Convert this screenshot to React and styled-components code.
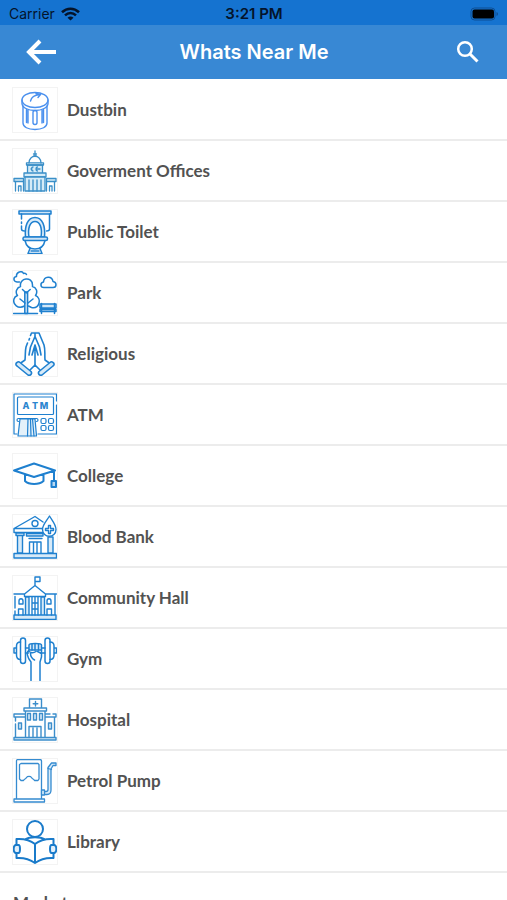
import styled, { createGlobalStyle } from "styled-components";

const GlobalStyle = createGlobalStyle`
  * {
    box-sizing: border-box;
  }

  body {
    margin: 0;
    background-color: white;
  }
`;

const Container = styled.div`
  height: 100vh;
  display: flex;
  flex-direction: column;
  overflow: hidden;
  background-color: white;
  font-family: Inter, "Liberation Sans", sans-serif;
`;

const StatusBar = styled.div`
  flex: none;
  height: 25px;
  padding: 2px 8px 0px 9px;
  display: grid;
  grid-template-columns: 1fr auto 1fr;
  align-items: center;
  background-color: #1573d0;
  color: #04142b;
  font-size: 14px;
`;

const Carrier = styled.div`
  display: flex;
  align-items: center;
  gap: 6px;
`;

const Time = styled.div`
  font-size: 15px;
  font-weight: 600;
`;

const Battery = styled.div`
  display: flex;
  justify-content: flex-end;
`;

const Header = styled.header`
  flex: none;
  height: 54px;
  padding: 0px 23px 0px 24px;
  display: flex;
  align-items: center;
  justify-content: space-between;
  background-color: #3888d4;
`;

const Title = styled.h1`
  margin: 0px;
  color: white;
  font-size: 20px;
  font-weight: 600;
`;

const IconButton = styled.button`
  width: 34px;
  height: 34px;
  padding: 0px;
  display: flex;
  align-items: center;
  justify-content: center;
  border: none;
  background: none;
  color: white;
  cursor: pointer;
`;

const List = styled.ul`
  flex: 1;
  min-height: 0;
  margin: 0px;
  padding: 1px 0px 0px;
  list-style: none;
  overflow-y: auto;
  scrollbar-width: none;
`;

const Item = styled.li`
  border-bottom: 2px solid #ececec;
`;

const ItemLink = styled.a`
  height: 59px;
  padding: 0px 13px;
  display: flex;
  align-items: center;
  gap: 10px;
  color: #525252;
  font-family: Lato, "Liberation Sans", sans-serif;
  font-size: 17px;
  font-weight: 700;
  text-decoration: none;
`;

const Thumb = styled.span`
  width: 44px;
  height: 44px;
  display: flex;
  outline: 1px solid #f3f3f3;
`;

const Drawing = styled.svg`
  width: 44px;
  height: 44px;
  fill: none;
  stroke: ${(props) => props.$color || "#1f80cf"};
  stroke-width: ${(props) => props.$weight || 1.5};
  stroke-linecap: round;
  stroke-linejoin: round;
`;

const Icon = ({ color, weight, children }) => (
  <Drawing viewBox="0 0 44 44" $color={color} $weight={weight} aria-hidden="true">
    {children}
  </Drawing>
);

const Dustbin = () => (
  <Icon color="#4a90ee" weight={1.4}>
    <ellipse cx="22" cy="12" rx="13" ry="7.5" />
    <path d="M9 12v3.500c0 4 6 7 13 7s13-3 13-7V12" />
    <path d="M10 18v17c0 4 5 6.500 12 6.500s12-2.500 12-6.500V18" />
    <path d="M17.500 13c1-4 4-6 9-6.500M23 5.500l4.500 1-2.500 3" />
    <rect x="20" y="22.500" width="4" height="14" rx="2" />
    <path d="M13.500 21.500v13M15 22v13M29 22v13M30.500 21.500v13" />
  </Icon>
);

const Government = () => (
  <Icon color="#3a8fc8" weight={1.3}>
    <path d="M22 2v5M20.500 7h3M16 14c0-9 12-9 12 0M20.500 5h3" />
    <path fill="#d5ebf7" d="M14.500 16h15v8h-15zM11 24h22v4H11z" />
    <path d="M13.500 13.800h17V16h-17zM20 18c-2 0-2 4 0 4M24.500 18c-2 0-2 4 0 4M18 20h1M24 20h3" />
    <path fill="#d5ebf7" d="M12 28h20v14H12z" />
    <path d="M16 31v11M20 31v11M24 31v11M28 31v11" />
    <path fill="#d5ebf7" d="M1 29.500h9.500v3H1zM33.500 29.500H43v3h-9.500z" />
    <path d="M2.500 32.500V42M5.500 42v-5h2.500v5M10.500 32.500V42M33.500 32.500V42M36.500 42v-5H39v5M41.500 32.500V42" />
  </Icon>
);

const Toilet = () => (
  <Icon>
    <path fill="#cfe5f7" d="M6 1h32v3H6z" />
    <path d="M8.500 4v5M8.500 12v1.500M8.500 16v3c0 1.500 1 2 3 2M36.500 4v15c0 1.500-1 2-3 2" />
    <path fill="#d9ebf9" d="M12.500 27c-1-11 2-19.500 9.500-19.500S32.500 16 31.500 27z" />
    <path fill="white" d="M16 27c-1.500-9 1-15.500 6-15.500S29.500 18 28 27z" />
    <rect x="10" y="27" width="24.500" height="3.500" rx="1.500" fill="#cfe5f7" />
    <path d="M12 30.500c1 5 4 8.500 10 8.500s9-3.500 10-8.500M17 38.500l-2 5h14l-2-5M18 41h8" />
  </Icon>
);

const Park = () => (
  <Icon weight={1.5}>
    <path d="M6.500 11H4C0 10.500 0 6 3.500 5.500 3 1 9-1 10.500 2.500c1.500-.5 2.500 0 3 1" />
    <path d="M31 16.500c-4 0-4-5-.5-5.500C31 5 39 4.500 40 10.500c4 .5 4 6 0 6z" />
    <path d="M11.500 35C5 38.500-.5 33.500 1 28c.5-2 2-3 3.500-3.500-2.500-3-1-8 3-9-1.500-9 12-10.500 12-1.500v1.500c4 1 5.500 5.500 3 9 6.500 3 4 13.500-4 12l-3-1.500" />
    <path fill="#d2e7f7" d="M11.800 42.500V21h2.800v21.500z" />
    <path d="M9.500 18.500l3.700 3.500 4-3.500M7 28l5 4M20 28l-5 4M.5 42.500h24" />
    <path fill="#d2e7f7" d="M27 33h16v4H27zM27 38.500h16v2H27z" />
    <path d="M28.500 32.500v10M41.500 32.500v10" />
  </Icon>
);

const Religious = () => (
  <Icon weight={1.6}>
    <path d="M18.500 1H26M22 1v3M26 1l5 12c1.500 5 .5 10 1 15l5 3.500M18.500 1l-1 2.500M16.500 6.500L16 8M14.500 11L13 15c-1 4-.5 9-1 13l-5 3.500" />
    <path d="M22 4.500L17.500 15l-1.500 8M22 4.500L26.500 15l1.500 8M22 13v20M22 13l-3 10M22 13l3 10" />
    <path fill="#d7eaf8" d="M4 30.500c1-1 2-1 3 0l11 9c1.500 2-.5 4.500-3 3.500L4 34c-1.500-1-1.500-2.500 0-3.500zM40 30.500c-1-1-2-1-3 0l-11 9c-1.500 2 .5 4.500 3 3.500l11-9c1.500-1 1.500-2.500 0-3.500z" />
    <path d="M22 33l-5 5M22 33l5 5" />
  </Icon>
);

const AtmText = styled.text`
  fill: #2b86cf;
  stroke: none;
  font-family: Inter, "Liberation Sans", sans-serif;
  font-size: 9px;
  font-weight: 800;
  text-anchor: middle;
`;

const Atm = () => (
  <Icon weight={1.2}>
    <path d="M4 41H1V1h42.500v7M43.500 12v29H25" />
    <rect x="4.500" y="4" width="36" height="17.500" rx="1" />
    <AtmText x="13" y="16">A</AtmText>
    <AtmText x="22" y="16">T</AtmText>
    <AtmText x="31" y="16">M</AtmText>
    <path d="M5.500 28.500c-2 0-2-3 0-3h18c2 0 2 3 0 3" />
    <path fill="#e4f1fa" d="M7 26h15l1.500 17H5z" />
    <path d="M15 26l-.5 17M17.500 26l.5 17M19.500 26l1.500 17" />
    <rect x="28" y="25.500" width="5" height="5" rx="1.500" />
    <rect x="35.500" y="25.500" width="5" height="5" rx="1.500" />
    <rect x="28" y="32.500" width="5" height="5" rx="1.500" />
    <rect x="35.500" y="32.500" width="5" height="5" rx="1.500" />
  </Icon>
);

const College = () => (
  <Icon weight={2}>
    <path d="M1 16.500l20-7 21 7-21 6.500zM12 20.500V27c4 4 14 4 18.500 0v-6.500M41 17v9" />
    <rect x="38.500" y="27" width="4.500" height="6" fill="#b9d9f2" />
  </Icon>
);

const BloodBank = () => (
  <Icon weight={1.4}>
    <path d="M30 7l-8-5.500L1 13.500v4h30M1 13.500h28" />
    <circle cx="22" cy="8.500" r="3" />
    <path fill="#d7eaf8" d="M4.500 20.500h5V38h-5zM35 22h5v16h-5zM3 18h8v2.500H3zM1 38.500h42.500V43H1z" />
    <path fill="#d7eaf8" d="M13.500 18.500H30V21H13.500z" />
    <path d="M16 23.500h13M16.500 38V27H28v11M20.500 27v11M24 27v11" />
    <path fill="white" d="M36.500 1c3 5 6.500 8.500 6.500 13.500 0 9-13.500 9-13.500 0C29.500 9.500 33.500 6 36.500 1z" />
    <path d="M35.500 10.500h2v3h3v2h-3v3h-2v-3h-3v-2h3z" />
  </Icon>
);

const CommunityHall = () => (
  <Icon weight={1.4}>
    <path d="M22 9.500V1h5v4.500h-5M11.500 18L22 9.500 32.500 18v2.500h-21zM1 18h10M33 18h10.500M2 20.500V32M2 35v4M42 18v21" />
    <path fill="#d7eaf8" d="M12.500 21h3.500v18h-3.500zM28 21h3.500v18H28zM1 39h42v4.500H1z" />
    <path d="M19 21v18M22 21v18M25 21v18M19 27h6M19 33h6" />
    <path d="M6 28v-3c0-3 4-3 4 0v3zM34 28v-3c0-3 4-3 4 0v3zM5.500 39v-6H10v6M34 39v-6h4.500v6" />
  </Icon>
);

const Gym = () => (
  <Icon weight={1.5}>
    <rect x="7.500" y="1" width="5" height="25.500" rx="2.500" />
    <rect x="32" y="1" width="5" height="25.500" rx="2.500" />
    <path d="M7.500 5C4 5 3.500 7 3.500 9v9c0 3 1 4.500 4 4.500M37 5c3.500 0 4 2 4 4v9c0 3-1 4.500-4 4.500M3 11H1v5h2M41.500 11h2v5h-2M12.500 11h3M12.500 16h3M29 11h3M28 16h4" />
    <path fill="#d7eaf8" d="M16 8c0-2 12.500-2 12.500 0v5H16z" />
    <path d="M19 7v6M22 7v6M25.500 7v6M16 13c-3 2-2 7 2 12v18.500M28.500 13v7L27 25v18.500M16 14.500c2 1.500 5 1.500 7 0M17.500 16.500c0 3 1.500 5 4 6.500M24.500 14.500l4 2" />
  </Icon>
);

const Hospital = () => (
  <Icon color="#3c8ecb" weight={1.4}>
    <path d="M16.500 10V1h12v9M22.500 3.500v4.500M20.200 5.700h4.600M11 10h22.500v3H11zM12.500 13v26.500M32 13v26.500M12 16H1v3h11M32 16h5M40 16h3v3H32M2.500 19v4M2.500 26v13.500M41.500 19v20.500" />
    <path fill="#d7eaf8" d="M14.500 15.500h3v6.500h-3zM20.500 15.500h3v6.500h-3zM26.500 15.500h3v6.500h-3zM5.500 25h3v6h-3zM35.500 25h3v6h-3zM1 39.500h42V42H1z" />
    <path d="M16 39.500V28.500h12v11M20 30v9.500M24 30v9.500" />
  </Icon>
);

const PetrolPump = () => (
  <Icon color="#358bd0" weight={1.3}>
    <path d="M3.500 40V2c0-1 .5-1.500 1.500-1.500h22c1 0 1.500.5 1.500 1.500v38M1 40h30.500v3H1z" />
    <path d="M8 4.500h17l1 1V20l-1 1.500h-3.500c-1-2-2-1-3-3-1-1.500-4-1.500-5 0-1 2-2 1-3 3H8L6.500 20V5.500z" />
    <path fill="#d7eaf8" d="M28.500 31h3v5h-3zM31.500 32.500H33c1.500 0 2-1 2-2V8.500L38.500 4H43v2.500h-3L38 10v21c0 3-1.500 4.500-4 4.500h-2.500z" />
    <path d="M35 9.500l3.500 1" />
  </Icon>
);

const Library = () => (
  <Icon color="#1a7bca" weight={2}>
    <circle cx="22" cy="9" r="8" />
    <path d="M13 19c3-2.500 15-2.500 18 0M22 24c-5-4-11-5.500-18.500-5v6M22 24c5-4 11-5.500 18.500-5v6M3.500 33v5c7-.5 13 1 18.500 5 5.500-4 11.500-5.500 18.500-5v-5M22 24v19" />
    <path fill="#e3f0fa" d="M2.500 25h3c2 0 2 8 0 8h-3c-2.500-1-2.500-7 0-8zM41.500 25h-3c-2 0-2 8 0 8h3c2.500-1 2.500-7 0-8z" />
  </Icon>
);

const places = [
  { name: "Dustbin", icon: Dustbin },
  { name: "Goverment Offices", icon: Government },
  { name: "Public Toilet", icon: Toilet },
  { name: "Park", icon: Park },
  { name: "Religious", icon: Religious },
  { name: "ATM", icon: Atm },
  { name: "College", icon: College },
  { name: "Blood Bank", icon: BloodBank },
  { name: "Community Hall", icon: CommunityHall },
  { name: "Gym", icon: Gym },
  { name: "Hospital", icon: Hospital },
  { name: "Petrol Pump", icon: PetrolPump },
  { name: "Library", icon: Library },
  { name: "Market" },
];

const Place = ({ name, icon: PlaceIcon }) => (
  <Item>
    <ItemLink href="#">
      {PlaceIcon && (
        <Thumb>
          <PlaceIcon />
        </Thumb>
      )}
      {name}
    </ItemLink>
  </Item>
);

const App = () => {
  return (
    <Container>
      <GlobalStyle />
      <StatusBar>
        <Carrier>
          Carrier
          <svg width="19" height="14" viewBox="0 0 19 14" fill="none" stroke="#04142b" strokeWidth="2.600" aria-hidden="true">
            <path d="M1 5.200c5-4.600 12-4.600 17 0M4 8.400c3.300-3 7.700-3 11 0" />
            <path d="M9.500 13.500L6.500 10.700c1.700-1.600 4.300-1.600 6 0z" fill="#04142b" stroke="none" />
          </svg>
        </Carrier>
        <Time>3:21 PM</Time>
        <Battery>
          <svg width="29" height="14" viewBox="0 0 29 14" aria-hidden="true">
            <rect x="1" y="1" width="24" height="12" rx="3.500" fill="none" stroke="#0f4f93" />
            <rect x="2.500" y="2.500" width="21.500" height="9" rx="2" fill="black" />
            <path d="M26.500 5v4c2-.8 2-3.200 0-4z" fill="#0f4f93" />
          </svg>
        </Battery>
      </StatusBar>
      <Header>
        <IconButton aria-label="Back">
          <svg width="34" height="28" viewBox="0 0 34 28" fill="none" stroke="white" strokeWidth="4" aria-hidden="true">
            <path d="M32 14H5M16 3L5 14l11 11" />
          </svg>
        </IconButton>
        <Title>Whats Near Me</Title>
        <IconButton aria-label="Search">
          <svg width="24" height="24" viewBox="0 0 24 24" fill="none" stroke="white" strokeWidth="2.500" aria-hidden="true">
            <circle cx="10" cy="9" r="6.800" />
            <path d="M15 14l7.500 7.500" strokeWidth="3" />
          </svg>
        </IconButton>
      </Header>
      <List>
        {places.map((place) => (
          <Place key={place.name} {...place} />
        ))}
      </List>
    </Container>
  );
};

export default App;
